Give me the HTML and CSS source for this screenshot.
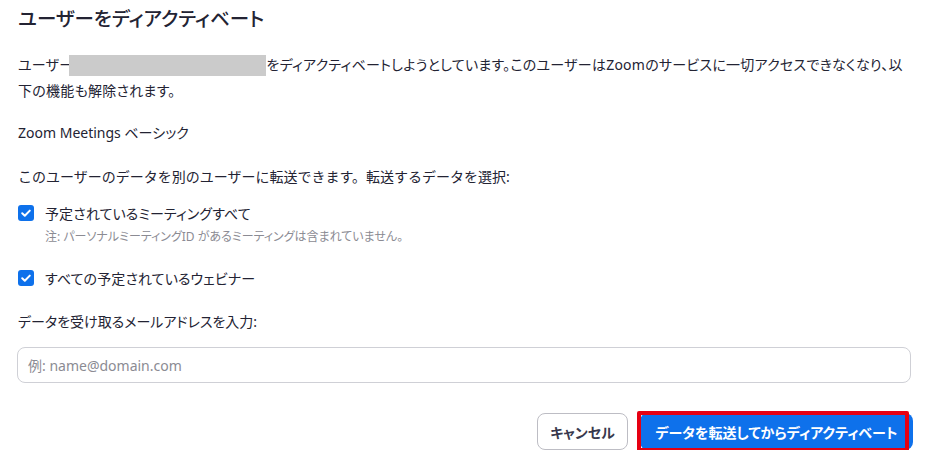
FILE: index.html
```html
<!DOCTYPE html>
<html lang="ja">
<head>
<meta charset="utf-8">
<title>ユーザーをディアクティベート</title>
<link rel="stylesheet" href="styles.css">
</head>
<body>
<div class="dialog">
  <h1 class="title">ユーザーをディアクティベート</h1>
  <p class="desc">ユーザー<span class="redact"></span>をディアクティベートしようとしています。このユーザーはZoomのサービスに一切アクセスできなくなり、以<br>下の機能も解除されます。</p>
  <p class="plan">Zoom Meetings ベーシック</p>
  <p class="transfer">このユーザーのデータを別のユーザーに転送できます。転送するデータを選択:</p>
  <label class="check first">
    <span class="box"><svg viewBox="0 0 16 16" width="16" height="16"><path d="M4.2 8.3l2.6 2.5 5-5.2" fill="none" stroke="#fff" stroke-width="2" stroke-linecap="round" stroke-linejoin="round"/></svg></span>
    <span class="label">予定されているミーティングすべて</span>
  </label>
  <p class="note">注: パーソナルミーティングID があるミーティングは含まれていません。</p>
  <label class="check second">
    <span class="box"><svg viewBox="0 0 16 16" width="16" height="16"><path d="M4.2 8.3l2.6 2.5 5-5.2" fill="none" stroke="#fff" stroke-width="2" stroke-linecap="round" stroke-linejoin="round"/></svg></span>
    <span class="label">すべての予定されているウェビナー</span>
  </label>
  <p class="email-label">データを受け取るメールアドレスを入力:</p>
  <div class="input">例: name@domain.com</div>
  <div class="actions">
    <button class="btn cancel">キャンセル</button>
    <button class="btn primary">データを転送してからディアクティベート</button>
  </div>
</div>
</body>
</html>
```
FILE: styles.css
```css
html, body {
  margin: 0;
  background: #ffffff;
}
body {
  font-family: "Noto Sans", "Noto Sans CJK JP", sans-serif;
  font-feature-settings: "palt";
  color: #232333;
  font-size: 14px;
}
.dialog {
  display: flex;
  flex-direction: column;
  padding: 0 14px 0 18px;
}
.title {
  margin: 0;
  font-size: 19.5px;
  font-weight: 500;
  line-height: 38px;
}
.desc {
  margin: 14px 0 0;
  line-height: 26px;
  letter-spacing: 0.25px;
}
.redact {
  display: inline-block;
  width: 197px;
  height: 21px;
  background: #cbcbcb;
  vertical-align: -6px;
  margin-left: -4px;
}
.plan {
  margin: 16px 0 0;
  line-height: 26px;
}
.transfer {
  margin: 18px 0 0;
  line-height: 26px;
  font-feature-settings: normal;
}
.check {
  display: flex;
  align-items: center;
  gap: 11px;
  height: 26px;
}
.check.first {
  margin-top: 10px;
}
.check.second {
  margin-top: 19px;
}
.box {
  width: 16px;
  height: 16px;
  border-radius: 3px;
  background: #0e71eb;
  display: flex;
}
.label {
  font-size: 14px;
  letter-spacing: 0.1px;
}
.note {
  margin: 2px 0 0 27px;
  font-size: 12px;
  line-height: 18px;
  color: #8b8b93;
}
.email-label {
  margin: 18px 0 0;
  line-height: 26px;
}
.input {
  margin: 12px 0 0 -1px;
  height: 36px;
  box-sizing: border-box;
  border: 1px solid #cfd0d6;
  border-radius: 8px;
  padding: 0 10px;
  display: flex;
  align-items: center;
  color: #8b8b93;
  font-size: 14px;
}
.actions {
  display: flex;
  justify-content: flex-end;
  gap: 12px;
  margin: 30px -2px 0 0;
}
.btn {
  font-family: inherit;
  font-feature-settings: "palt";
  font-size: 14px;
  font-weight: 700;
  height: 37px;
  border-radius: 8px;
  padding: 0;
  cursor: pointer;
}
.cancel {
  width: 91px;
  background: #ffffff;
  border: 1px solid #bdbdc4;
  color: #39394d;
}
.primary {
  position: relative;
  width: 273px;
  background: #0e71eb;
  border: none;
  color: #ffffff;
}
.primary::after {
  content: "";
  position: absolute;
  left: -3px;
  top: -2px;
  width: 264px;
  height: 33px;
  border: 4px solid #e60012;
  border-radius: 2px;
}
```
